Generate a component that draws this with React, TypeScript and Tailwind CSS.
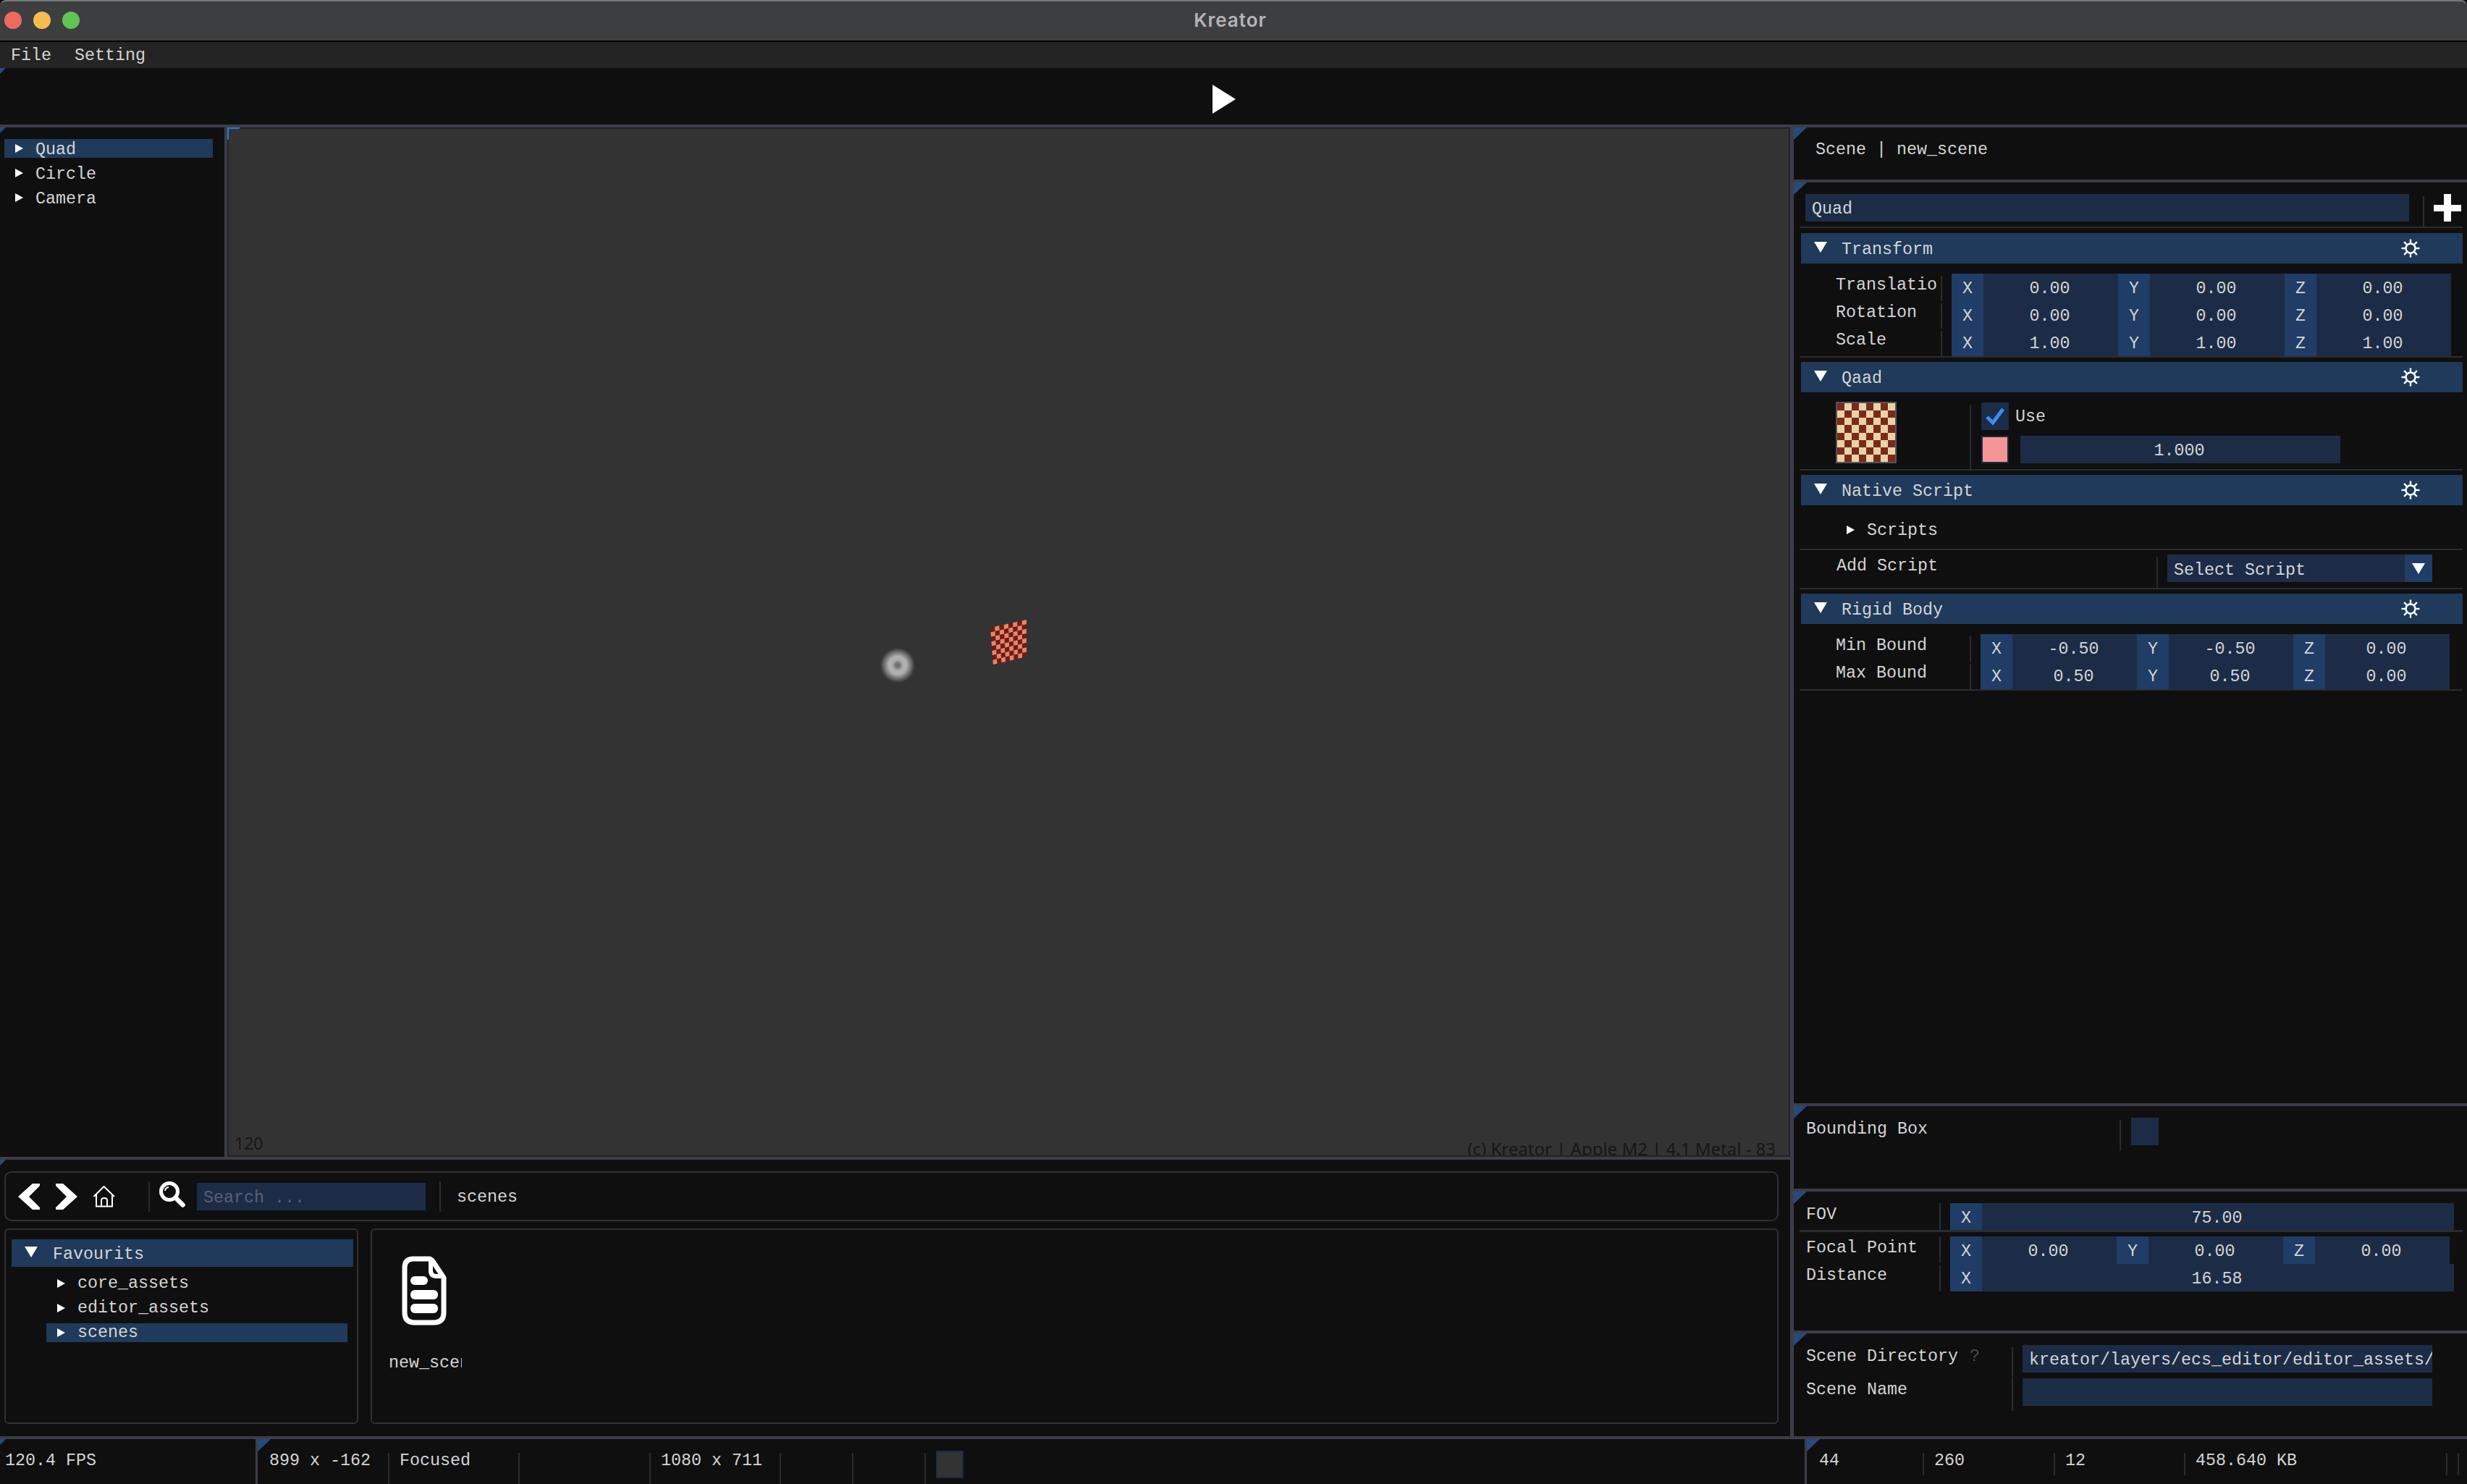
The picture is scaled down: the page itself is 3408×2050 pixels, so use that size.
import type { ReactNode } from 'react'

// squares of the textured quad, corners read off the viewport
const quadCorners = { tl: [52, 11], tr: [102, 0], br: [102, 51], bl: [56, 62] }

function quadPoint(u: number, v: number) {
  const { tl, tr, br, bl } = quadCorners
  const x = (1 - v) * ((1 - u) * tl[0] + u * tr[0]) + v * ((1 - u) * bl[0] + u * br[0])
  const y = (1 - v) * ((1 - u) * tl[1] + u * tr[1]) + v * ((1 - u) * bl[1] + u * br[1])
  return `${x},${y}`
}

function Corner({ size = 'large' }: { size?: 'large' | 'small' }) {
  return (
    <div
      className={`absolute top-0 left-0 bg-[#264a7c] [clip-path:polygon(0_0,100%_0,0_100%)] ${
        size === 'large' ? 'w-[18px] h-[17px]' : 'w-[8px] h-[8px]'
      }`}
    />
  )
}

function HSep() {
  return <div className="h-[4px] shrink-0 bg-[#3d3d48]" />
}

function Rule() {
  return <div className="ml-[8px] w-[916px] h-[2px] shrink-0 bg-[#2b2b31]" />
}

function Gear() {
  const spokes = [0, 45, 90, 135, 180, 225, 270, 315]
  return (
    <svg width="26" height="26" viewBox="0 0 26 26" className="text-white">
      <circle cx="13" cy="13" r="6.5" fill="none" stroke="currentColor" strokeWidth="2.6" />
      {spokes.map((a) => (
        <line
          key={a}
          x1="13"
          y1="6"
          x2="13"
          y2="0.5"
          stroke="currentColor"
          strokeWidth="2.4"
          transform={`rotate(${a} 13 13)`}
        />
      ))}
    </svg>
  )
}

function TriDown({ className = '' }: { className?: string }) {
  return (
    <svg width="18" height="15" viewBox="0 0 18 15" className={className}>
      <polygon points="0,0 18,0 9,15" fill="white" />
    </svg>
  )
}

function TriRight({ className = '' }: { className?: string }) {
  return (
    <svg width="11" height="12" viewBox="0 0 11 12" className={className}>
      <polygon points="0,0 11,6 0,12" fill="white" />
    </svg>
  )
}

function SectionHeader({ title }: { title: string }) {
  return (
    <div className="ml-[10px] w-[914px] h-[42px] shrink-0 flex items-center bg-[#1f3a5a]">
      <TriDown className="ml-[18px] mb-[3px]" />
      <span className="ml-[20px] mt-[5px] flex-1">{title}</span>
      <Gear />
      <div className="w-[59px]" />
    </div>
  )
}

function AxisCell({ axis, value, width }: { axis: string; value: string; width: string }) {
  return (
    <>
      <div className="w-[44px] h-full shrink-0 bg-[#1f3d66] text-center">{axis}</div>
      <div className={`h-full shrink-0 text-center pr-[3px] ${width}`}>{value}</div>
    </>
  )
}

function VecRow({
  label,
  values,
  labelClass,
  dividerClass,
  width,
}: {
  label: string
  values: string[]
  labelClass: string
  dividerClass: string
  width: string
}) {
  return (
    <div className="flex h-[38px] shrink-0">
      <div className={`h-full overflow-hidden whitespace-nowrap leading-[32px] ${labelClass}`}>{label}</div>
      <div className={`mt-[3px] h-[35px] w-[2px] bg-[#2b2b31] ${dividerClass}`} />
      <div className="flex h-full leading-[42px] bg-[#1c2c47]">
        <AxisCell axis="X" value={values[0]} width={width} />
        <AxisCell axis="Y" value={values[1]} width={width} />
        <AxisCell axis="Z" value={values[2]} width={width} />
      </div>
    </div>
  )
}

function EntityPanel() {
  return (
    <div className="relative h-[1272px] shrink-0 flex flex-col">
      <Corner />
      {/* name field */}
      <div className="flex h-[61px] shrink-0 pt-[16px]">
        <div className="ml-[16px] w-[834px] h-[38px] bg-[#1c2c47] pl-[9px] leading-[42px]">Quad</div>
        <div className="ml-[19px] mt-[3px] w-[2px] h-[42px] bg-[#2b2b31]" />
        <div className="ml-[13px] relative w-[38px] h-[38px]">
          <div className="absolute left-[14px] top-0 w-[10px] h-[38px] bg-white" />
          <div className="absolute left-0 top-[15px] w-[38px] h-[9px] bg-white" />
        </div>
      </div>
      <Rule />
      <div className="mt-[7px]" />
      <SectionHeader title="Transform" />
      <div className="mt-[14px]" />
      <VecRow label="Translation" values={['0.00', '0.00', '0.00']} labelClass="ml-[58px] w-[139px]" dividerClass="ml-[6px] mr-[13px]" width="w-[186px]" />
      <VecRow label="Rotation" values={['0.00', '0.00', '0.00']} labelClass="ml-[58px] w-[139px]" dividerClass="ml-[6px] mr-[13px]" width="w-[186px]" />
      <VecRow label="Scale" values={['1.00', '1.00', '1.00']} labelClass="ml-[58px] w-[139px]" dividerClass="ml-[6px] mr-[13px]" width="w-[186px]" />
      <Rule />
      <div className="mt-[6px]" />
      <SectionHeader title="Qaad" />
      {/* texture and tint */}
      <div className="flex h-[106px] shrink-0">
        <div className="ml-[58px] mt-[13px] w-[84px] h-[85px] border-2 border-[#555] grid grid-cols-8 grid-rows-8 overflow-hidden">
          {Array.from({ length: 64 }).map((_, i) => (
            <div key={i} className={(i + (i >> 3)) % 2 === 0 ? 'bg-[#7a2a1d]' : 'bg-[#e9d3a6]'} />
          ))}
        </div>
        <div className="ml-[101px] mt-[17px] w-[2px] h-[89px] bg-[#2b2b31]" />
        <div className="ml-[14px] mt-[14px] flex flex-col">
          <div className="flex h-[38px] items-center">
            <div className="w-[38px] h-[38px] bg-[#1c2c47] flex items-center justify-center">
              <svg width="28" height="26" viewBox="0 0 28 26">
                <polyline points="3,14 11,22 25,3" fill="none" stroke="#3a8df2" strokeWidth="5" />
              </svg>
            </div>
            <span className="ml-[9px] mt-[3px]">Use</span>
          </div>
          <div className="flex mt-[8px] h-[38px]">
            <div className="w-[38px] h-[38px] bg-[#f59595] border-2 border-[#1c2c47]" />
            <div className="ml-[16px] w-[442px] h-[38px] bg-[#1c2c47] text-center leading-[42px] pr-[3px]">1.000</div>
          </div>
        </div>
      </div>
      <Rule />
      <div className="mt-[6px]" />
      <SectionHeader title="Native Script" />
      <div className="flex h-[60px] shrink-0 items-center pl-[73px] pt-[8px]">
        <TriRight />
        <span className="ml-[17px] mt-[3px]">Scripts</span>
      </div>
      <Rule />
      <div className="flex h-[52px] shrink-0">
        <div className="ml-[59px] w-[442px] pt-[6px] leading-[32px]">Add Script</div>
        <div className="mt-[9px] w-[2px] h-[43px] bg-[#2b2b31]" />
        <div className="ml-[13px] mt-[6px] w-[366px] h-[38px] bg-[#1c2c47] flex">
          <div className="flex-1 pl-[9px] leading-[44px]">Select Script</div>
          <div className="w-[38px] h-full bg-[#1f3d66] flex items-center justify-center">
            <TriDown />
          </div>
        </div>
      </div>
      <Rule />
      <div className="mt-[6px]" />
      <SectionHeader title="Rigid Body" />
      <div className="mt-[14px]" />
      <VecRow label="Min Bound" values={['-0.50', '-0.50', '0.00']} labelClass="ml-[58px] w-[185px]" dividerClass="mr-[13px]" width="w-[172px]" />
      <VecRow label="Max Bound" values={['0.50', '0.50', '0.00']} labelClass="ml-[58px] w-[185px]" dividerClass="mr-[13px]" width="w-[172px]" />
      <Rule />
    </div>
  )
}

function CameraPanel() {
  return (
    <div className="relative h-[192px] shrink-0 flex flex-col">
      <Corner />
      <div className="flex h-[54px] shrink-0 pt-[16px]">
        <div className="ml-[17px] w-[184px] leading-[32px]">FOV</div>
        <div className="w-[2px] h-[38px] bg-[#2b2b31]" />
        <div className="ml-[13px] w-[696px] h-[38px] bg-[#1c2c47] flex leading-[42px]">
          <div className="w-[44px] bg-[#1f3d66] text-center">X</div>
          <div className="flex-1 text-center pr-[3px]">75.00</div>
        </div>
      </div>
      <div className="-mt-[1px] ml-[8px] w-[916px] h-[3px] shrink-0 bg-[#2b2b31]" />
      <div className="flex h-[38px] shrink-0 mt-[6px]">
        <div className="ml-[17px] w-[184px] leading-[32px]">Focal Point</div>
        <div className="w-[2px] h-[36px] bg-[#2b2b31]" />
        <div className="ml-[13px] flex leading-[42px] bg-[#1c2c47]">
          <AxisCell axis="X" value="0.00" width="w-[186px]" />
          <AxisCell axis="Y" value="0.00" width="w-[186px]" />
          <AxisCell axis="Z" value="0.00" width="w-[186px]" />
        </div>
      </div>
      <div className="flex h-[38px] shrink-0">
        <div className="ml-[17px] w-[184px] leading-[32px]">Distance</div>
        <div className="mt-[2px] w-[2px] h-[36px] bg-[#2b2b31]" />
        <div className="ml-[13px] w-[696px] h-[38px] bg-[#1c2c47] flex leading-[42px]">
          <div className="w-[44px] bg-[#1f3d66] text-center">X</div>
          <div className="flex-1 text-center pr-[3px]">16.58</div>
        </div>
      </div>
    </div>
  )
}

function ScenePanel() {
  return (
    <div className="relative h-[142px] shrink-0 flex flex-col pt-[16px]">
      <Corner />
      <div className="flex h-[38px] shrink-0">
        <div className="ml-[17px] w-[284px] leading-[32px]">
          Scene Directory <span className="ml-[2px] text-[#4b4b4f]">?</span>
        </div>
        <div className="mt-[3px] w-[2px] h-[41px] bg-[#2b2b31]" />
        <div className="ml-[13px] w-[566px] h-[38px] bg-[#1c2c47] pl-[9px] leading-[42px] overflow-hidden whitespace-nowrap">
          kreator/layers/ecs_editor/editor_assets/
        </div>
      </div>
      <div className="flex h-[38px] shrink-0 mt-[8px]">
        <div className="ml-[17px] w-[284px] leading-[32px]">Scene Name</div>
        <div className="-mt-[1px] w-[2px] h-[46px] bg-[#2b2b31]" />
        <div className="ml-[13px] w-[566px] h-[38px] bg-[#1c2c47]" />
      </div>
    </div>
  )
}

function RightPanel() {
  return (
    <div className="w-[930px] shrink-0 flex flex-col">
      <div className="relative h-[72px] shrink-0 pl-[30px] pt-[19px] leading-[24px]">
        <Corner />
        Scene | new_scene
      </div>
      <HSep />
      <EntityPanel />
      <HSep />
      <div className="relative h-[114px] shrink-0 flex pt-[16px]">
        <Corner />
        <div className="ml-[17px] w-[433px] leading-[32px]">Bounding Box</div>
        <div className="mt-[3px] w-[2px] h-[43px] bg-[#2b2b31]" />
        <div className="ml-[14px] w-[38px] h-[38px] bg-[#1c2c47]" />
      </div>
      <HSep />
      <CameraPanel />
      <HSep />
      <ScenePanel />
    </div>
  )
}

function TreeRow({ name, selected }: { name: string; selected?: boolean }) {
  return (
    <div className={`flex items-center h-[26px] w-[288px] ${selected ? 'bg-[#1f3a5a]' : ''}`}>
      <TriRight className="ml-[15px]" />
      <span className="ml-[17px] mt-[5px]">{name}</span>
    </div>
  )
}

function Viewport() {
  const cells: ReactNode[] = []
  for (let r = 0; r < 8; r++) {
    for (let c = 0; c < 8; c++) {
      const pts = [
        quadPoint(c / 8, r / 8),
        quadPoint((c + 1) / 8, r / 8),
        quadPoint((c + 1) / 8, (r + 1) / 8),
        quadPoint(c / 8, (r + 1) / 8),
      ].join(' ')
      cells.push(<polygon key={`${r}-${c}`} points={pts} fill={(r + c) % 2 === 0 ? '#701c12' : '#e8846c'} />)
    }
  }
  return (
    <div className="relative flex-1 border-2 border-[#222226] bg-[#333333] overflow-hidden font-['Noto_Sans',sans-serif]">
      {/* circle entity */}
      <div className="absolute left-[900px] top-[717px] w-[48px] h-[48px] rounded-full bg-[radial-gradient(circle_closest-side,#707070_0%,#707070_10%,#b0b0b0_32%,#b0b0b0_52%,#333333_100%)]" />
      {/* quad entity */}
      <svg className="absolute left-[1000px] top-[678px]" width="102" height="62" viewBox="0 0 102 62">
        {cells}
      </svg>
      <div className="absolute left-[8px] bottom-[2px] text-[23px] leading-[30px] text-[#161616]">120</div>
      <div className="absolute right-[18px] -bottom-[9px] text-[24px] leading-[36px] text-[#161616] whitespace-nowrap">
        (c) Kreator | Apple M2 | 4.1 Metal - 83
      </div>
    </div>
  )
}

function NavIcon({ dir }: { dir: 'back' | 'forward' }) {
  return (
    <svg width="30" height="36" viewBox="0 0 30 36">
      <polygon
        points={
          dir === 'back'
            ? '20,0 30,0 30,3 15,18 30,33 30,36 20,36 0,18'
            : '10,0 0,0 0,3 15,18 0,33 0,36 10,36 30,18'
        }
        fill="white"
      />
    </svg>
  )
}

function BottomPanel() {
  return (
    <div className="relative h-[382px] shrink-0 pt-[16px]">
      <Corner size="small" />
      <div className="ml-[6px] w-[2451px] h-[69px] border-2 border-[#303036] rounded-[10px] flex items-center pl-[17px]">
        <NavIcon dir="back" />
        <div className="ml-[22px]">
          <NavIcon dir="forward" />
        </div>
        <svg className="ml-[22px]" width="30" height="30" viewBox="0 0 30 30" fill="none" stroke="white" strokeWidth="2">
          <path d="M0.5 15 L14.5 1 L29 15 M4 12 V28.5 H26 V12 M11 28.5 V20 Q11 17 15 17 Q19 17 19 20 V28.5" />
        </svg>
        <div className="ml-[46px] w-[2px] h-[42px] bg-[#2b2b31]" />
        <svg className="ml-[13px] mb-[6px]" width="36" height="36" viewBox="0 0 36 36" fill="none" stroke="white">
          <circle cx="14" cy="14" r="11.5" strokeWidth="5" />
          <path d="M8 13 Q8.5 8.5 13 8" strokeWidth="2" />
          <path d="M23 23 L32.5 32.5" strokeWidth="6.5" strokeLinecap="round" />
        </svg>
        <div className="ml-[16px] w-[316px] h-[38px] bg-[#1c2c47] pl-[9px] leading-[42px] text-[#58616f]">Search ...</div>
        <div className="ml-[19px] w-[2px] h-[42px] bg-[#2b2b31]" />
        <div className="ml-[22px] mt-[3px]">scenes</div>
      </div>
      <div className="flex mt-[10px] ml-[6px] h-[270px]">
        <div className="w-[489px] h-full border-2 border-[#303036] rounded-[6px] pt-[13px] pl-[8px]">
          <div className="w-[472px] h-[38px] flex items-center bg-[#1f3a5a]">
            <TriDown className="ml-[18px] mb-[3px]" />
            <span className="ml-[21px] mt-[5px]">Favourits</span>
          </div>
          <div className="flex items-center h-[34px] mt-[6px] pl-[63px]">
            <TriRight />
            <span className="ml-[17px]">core_assets</span>
          </div>
          <div className="flex items-center h-[34px] pl-[63px]">
            <TriRight />
            <span className="ml-[17px]">editor_assets</span>
          </div>
          <div className="flex items-center h-[26px] mt-[4px] ml-[48px] w-[416px] bg-[#1f3a5a] pl-[15px]">
            <TriRight />
            <span className="ml-[17px]">scenes</span>
          </div>
        </div>
        <div className="ml-[17px] flex-1 mr-[16px] h-full border-2 border-[#303036] rounded-[6px] pl-[23px] pt-[36px]">
          <svg className="ml-[18px]" width="62" height="96" viewBox="0 0 62 96" fill="none" stroke="white" strokeWidth="7">
            <path d="M16 4 H38 Q42 5 46 12 L58 30 V78 Q58 92 44 92 H18 Q4 92 4 78 V16 Q4 4 16 4 Z" />
            <path d="M40 4 V20 Q40 28 48 28 H58" strokeWidth="6" />
            <g fill="white" stroke="none">
              <rect x="12" y="28" width="24" height="12" rx="6" />
              <rect x="12" y="47" width="38" height="13" rx="6" />
              <rect x="12" y="66" width="38" height="13" rx="6" />
            </g>
          </svg>
          <div className="mt-[38px] w-[101px] overflow-hidden whitespace-nowrap leading-[28px]">new_scene</div>
        </div>
      </div>
    </div>
  )
}

function StatusCell({ width, children, short }: { width: string; children?: ReactNode; short?: boolean }) {
  return (
    <div className={`relative shrink-0 h-full pt-[16px] pl-[16px] leading-[32px] ${width}`}>
      <div className={`absolute left-0 top-[19px] w-[2px] bg-[#2b2b31] ${short ? 'h-[31px]' : 'h-[43px]'}`} />
      {children}
    </div>
  )
}

function StatusBar() {
  return (
    <div className="flex h-[62px] shrink-0">
      <div className="relative w-[353px] shrink-0 pl-[7px] pt-[16px] leading-[28px]">
        <Corner size="small" />
        120.4 FPS
      </div>
      <div className="w-[3px] shrink-0 bg-[#3d3d48]" />
      <div className="relative w-[2137px] shrink-0 flex">
        <Corner />
        <div className="w-[180px] shrink-0 pl-[16px] pt-[16px] leading-[28px]">899 x -162</div>
        <StatusCell width="w-[180px]">
          <div className="-mt-[2px]">Focused</div>
        </StatusCell>
        <StatusCell width="w-[181px]" />
        <StatusCell width="w-[180px]">
          <div className="-mt-[2px]">1080 x 711</div>
        </StatusCell>
        <StatusCell width="w-[100px]" />
        <StatusCell width="w-[100px]" />
        <StatusCell width="w-[1216px]">
          <div className="w-[38px] h-[38px] bg-[#333333] border-2 border-[#1c2c47]" />
        </StatusCell>
      </div>
      <div className="w-[3px] shrink-0 bg-[#3d3d48]" />
      <div className="relative flex-1 flex">
        <Corner />
        <div className="w-[160px] shrink-0 pl-[17px] pt-[16px] leading-[28px]">44</div>
        <StatusCell short width="w-[181px]">
          <div className="-mt-[2px]">260</div>
        </StatusCell>
        <StatusCell short width="w-[180px]">
          <div className="-mt-[2px]">12</div>
        </StatusCell>
        <StatusCell short width="w-[362px]">
          <div className="-mt-[2px]">458.640 KB</div>
        </StatusCell>
        <StatusCell short width="w-[12px]" />
        <StatusCell short width="w-[17px]" />
      </div>
    </div>
  )
}

export default function App() {
  return (
    <div className="w-[3408px] h-[2050px] flex flex-col overflow-hidden bg-[#0f0f0f] text-[#d4d4d4] text-[23.33px] font-['Liberation_Mono',monospace]">
      {/* window title bar */}
      <div className="relative h-[58px] shrink-0 bg-[#3d3e40] border-t-2 border-b-2 border-t-[#77787a] border-b-black rounded-t-[8px] flex items-center justify-center">
        <div className="absolute left-[6px] top-[14px] flex gap-[16px]">
          <div className="w-[24px] h-[24px] rounded-full bg-[#ee6a5f]" />
          <div className="w-[24px] h-[24px] rounded-full bg-[#f5bd4f]" />
          <div className="w-[24px] h-[24px] rounded-full bg-[#61c454]" />
        </div>
        <span className="font-['Inter',sans-serif] font-semibold text-[26px] tracking-[1px] text-[#b4b5b7] ml-[-9px] mb-[3px]">Kreator</span>
      </div>
      {/* menu */}
      <div className="h-[36px] shrink-0 bg-[#242424] flex items-center pl-[15px] gap-[32px] pt-[2px]">
        <span>File</span>
        <span>Setting</span>
      </div>
      {/* toolbar */}
      <div className="relative h-[78px] shrink-0 flex justify-center items-center">
        <Corner size="small" />
        <svg width="32" height="40" viewBox="0 0 32 40" className="ml-[-26px] mt-[8px]">
          <polygon points="0,0 32,20 0,40" fill="white" />
        </svg>
      </div>
      <HSep />
      <div className="flex h-[1808px] shrink-0">
        <div className="w-[2473px] shrink-0 flex flex-col">
          <div className="flex h-[1422px] shrink-0">
            <div className="relative w-[310px] shrink-0 pt-[16px] pl-[6px] flex flex-col gap-[8px]">
              <Corner size="small" />
              <TreeRow name="Quad" selected />
              <TreeRow name="Circle" />
              <TreeRow name="Camera" />
            </div>
            <div className="w-[4px] shrink-0 bg-[#3d3d48]" />
            <div className="relative flex-1 flex">
              <Viewport />
              {/* focus marker */}
              <div className="absolute left-0 top-0 w-[17px] h-[17px] border-t-2 border-l-2 border-[#1b7be5]" />
            </div>
          </div>
          <HSep />
          <BottomPanel />
        </div>
        <div className="w-[5px] shrink-0 bg-[#3d3d48]" />
        <RightPanel />
      </div>
      <HSep />
      <StatusBar />
    </div>
  )
}
